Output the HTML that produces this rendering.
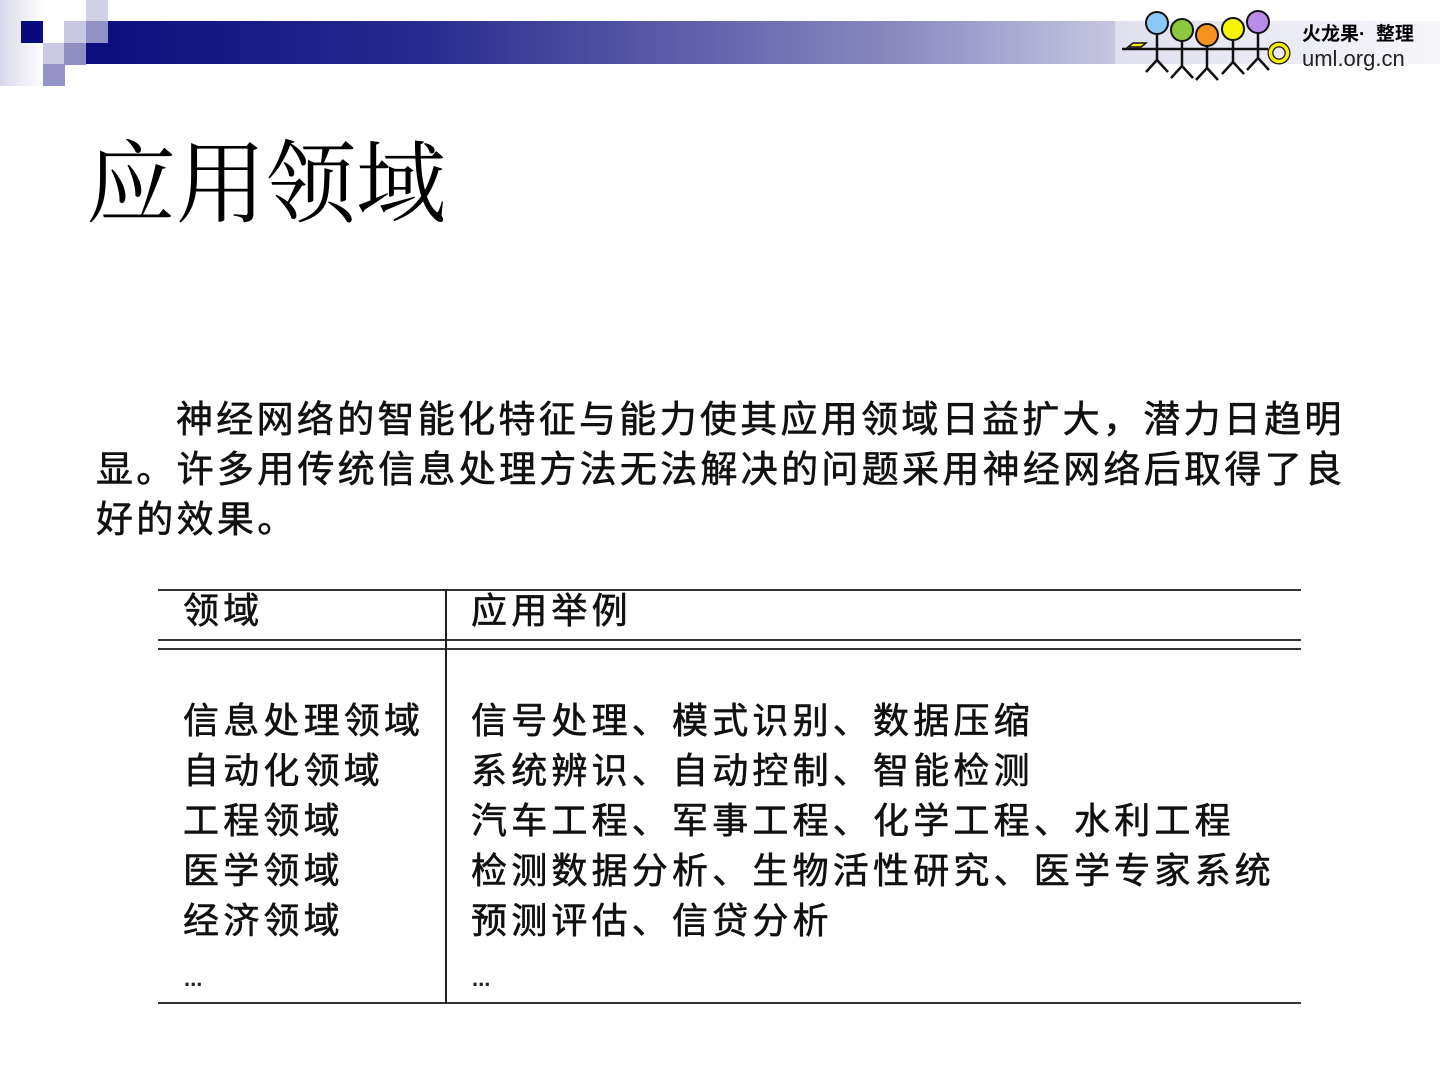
<!DOCTYPE html>
<html><head><meta charset="utf-8"><style>
body{margin:0;width:1440px;height:1080px;background:#fff;position:relative;overflow:hidden;font-family:"Liberation Sans","Noto Sans CJK SC",sans-serif}
.a{position:absolute}
.sq{position:absolute;width:21.5px;height:21.5px}
.cjk{font-family:"Liberation Sans","Noto Sans CJK SC",sans-serif;color:#111;white-space:nowrap;-webkit-text-stroke:0.6px #111}
.p{font-size:37px;letter-spacing:3.3px;line-height:50px}
.t{font-size:36px;letter-spacing:4.2px;line-height:50px}
</style></head><body>
<div class="a" style="left:0;top:0;width:44px;height:86px;background:linear-gradient(90deg,#d8d8ea,#fff)"></div>
<div class="a" style="left:86px;top:21px;width:1354px;height:43px;background:linear-gradient(90deg,#0c0c7e 0%,#2a2a8e 25%,#8a8ac0 60%,#e8e8f4 85%,#fafafd 100%)"></div>
<div class="sq" style="left:21px;top:21px;background:#0a0a80"></div>
<div class="sq" style="left:86px;top:0;background:#d0d0e6"></div>
<div class="sq" style="left:64px;top:21px;background:#c8c8e2"></div>
<div class="sq" style="left:86px;top:21px;background:#9292c8"></div>
<div class="sq" style="left:43px;top:43px;background:#cacae4"></div>
<div class="sq" style="left:64px;top:43px;background:#8e8ec4"></div>
<div class="sq" style="left:43px;top:64px;background:#9494c8"></div>
<div class="a" style="left:1115px;top:0;width:325px;height:86px;background:#fff"></div>
<div class="a" style="left:1115px;top:21px;width:325px;height:43px;background:linear-gradient(90deg,#e0e0ee,#f6f6fa)"></div>
<svg class="a" style="left:1110px;top:0" width="200" height="90" viewBox="1110 0 200 90">
<g stroke="#111" stroke-width="2.5" fill="none">
<line x1="1122" y1="49" x2="1268" y2="49"/>
<line x1="1157" y1="33" x2="1157" y2="60"/><path d="M1146 72 L1157 60 L1168 72"/>
<line x1="1182" y1="41" x2="1182" y2="66"/><path d="M1171 78 L1182 66 L1193 78"/>
<line x1="1207" y1="46" x2="1207" y2="68"/><path d="M1196 80 L1207 68 L1218 80"/>
<line x1="1233" y1="40" x2="1233" y2="62"/><path d="M1222 74 L1233 62 L1244 74"/>
<line x1="1258" y1="33" x2="1258" y2="58"/><path d="M1247 70 L1258 58 L1269 70"/>
</g>
<polygon points="1128,47 1133,43 1146,43 1141,47" fill="#f5f000" stroke="#111" stroke-width="1.5"/>
<g stroke="#111" stroke-width="2">
<circle cx="1157" cy="23" r="11" fill="#8ec8f8"/>
<circle cx="1182" cy="30" r="11" fill="#8cc83c"/>
<circle cx="1207" cy="35" r="11" fill="#f7921e"/>
<circle cx="1233" cy="29" r="11" fill="#f7f500"/>
<circle cx="1258" cy="22" r="11" fill="#b88ce8"/>
</g>
<circle cx="1279" cy="53" r="8.5" fill="none" stroke="#111" stroke-width="6"/>
<circle cx="1279" cy="53" r="8.5" fill="none" stroke="#f5f000" stroke-width="3.5"/>
</svg>
<div class="a" style="left:1302px;top:19px;font-size:19px;font-weight:bold;color:#000;white-space:nowrap;font-family:'Liberation Sans','Noto Sans CJK SC',sans-serif">火龙果·&nbsp; 整理</div>
<div class="a" style="left:1302px;top:46px;font-size:22px;color:#222">uml.org.cn</div>
<div class="a" style="left:86px;top:131px;font-size:90px;font-family:'Liberation Serif','Noto Serif CJK SC',serif;color:#000;line-height:110px">应用领域</div>
<div class="a cjk p" style="left:96px;top:395px">
<div style="padding-left:80px">神经网络的智能化特征与能力使其应用领域日益扩大，潜力日趋明</div>
<div>显。许多用传统信息处理方法无法解决的问题采用神经网络后取得了良</div>
<div>好的效果。</div></div>
<div class="a" style="left:158px;top:589px;width:1143px;height:2px;background:#333"></div>
<div class="a" style="left:158px;top:639px;width:1143px;height:2px;background:#333"></div>
<div class="a" style="left:158px;top:648px;width:1143px;height:2px;background:#333"></div>
<div class="a" style="left:158px;top:1002px;width:1143px;height:2px;background:#333"></div>
<div class="a" style="left:445px;top:589px;width:2px;height:415px;background:#222"></div>
<div class="a cjk t" style="left:183px;top:586px">领域</div>
<div class="a cjk t" style="left:471px;top:586px">应用举例</div>
<div class="a cjk t" style="left:183px;top:696px">信息处理领域<br>自动化领域<br>工程领域<br>医学领域<br>经济领域</div>
<div class="a cjk t" style="left:471px;top:696px">信号处理、模式识别、数据压缩<br>系统辨识、自动控制、智能检测<br>汽车工程、军事工程、化学工程、水利工程<br>检测数据分析、生物活性研究、医学专家系统<br>预测评估、信贷分析</div>
<div class="a" style="left:184px;top:966px;font-size:22px;font-weight:bold;color:#222">...</div>
<div class="a" style="left:472px;top:966px;font-size:22px;font-weight:bold;color:#222">...</div>
</body></html>
